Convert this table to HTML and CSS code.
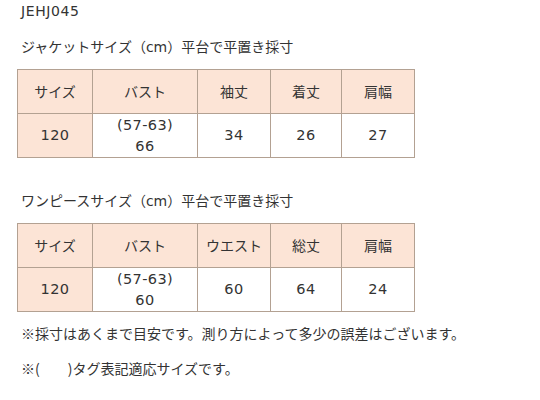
FILE: index.html
```html
<!DOCTYPE html>
<html lang="ja">
<head>
<meta charset="utf-8">
<link rel="stylesheet" href="styles.css">
</head>
<body>
<div class="page">
  <p class="code">JEHJ045</p>
  <p class="title">ジャケットサイズ（<span class="lat">cm</span>）平台で平置き採寸</p>
  <table class="size">
    <colgroup><col class="c1"><col class="c2"><col class="c3"><col class="c4"><col class="c5"></colgroup>
    <tr><th>サイズ</th><th>バスト</th><th>袖丈</th><th>着丈</th><th>肩幅</th></tr>
    <tr><th class="rowhead">120</th><td>(57-63)<br>66</td><td>34</td><td>26</td><td>27</td></tr>
  </table>
  <p class="title second">ワンピースサイズ（<span class="lat">cm</span>）平台で平置き採寸</p>
  <table class="size">
    <colgroup><col class="c1"><col class="c2"><col class="c3"><col class="c4"><col class="c5"></colgroup>
    <tr><th>サイズ</th><th>バスト</th><th>ウエスト</th><th>総丈</th><th>肩幅</th></tr>
    <tr><th class="rowhead">120</th><td>(57-63)<br>60</td><td>60</td><td>64</td><td>24</td></tr>
  </table>
  <p class="note">※採寸はあくまで目安です。測り方によって多少の誤差はございます。</p>
  <p class="note second-note">※(　　)タグ表記適応サイズです。</p>
</div>
</body>
</html>
```
FILE: styles.css
```css
html, body {
  margin: 0;
  padding: 0;
  background: #ffffff;
}
body {
  font-family: "Noto Sans CJK JP", sans-serif;
  font-size: 14px;
  line-height: 21px;
  color: #333333;
}
.page {
  padding: 1px 0 0 17px;
}
p {
  margin: 0;
  padding-left: 4px;
}
.code {
  font-family: "DejaVu Sans", "Noto Sans CJK JP", sans-serif;
  letter-spacing: 0.6px;
}
.title {
  margin-top: 14px;
}
.title.second {
  margin-top: 32px;
}
.lat {
  font-family: "DejaVu Sans", sans-serif;
}
.size {
  border-collapse: collapse;
  table-layout: fixed;
  width: 397px;
  margin-top: 11px;
}
.size .c1 { width: 75px; }
.size .c2 { width: 105px; }
.size .c3 { width: 73px; }
.size .c4 { width: 71px; }
.size .c5 { width: 73px; }
.size th, .size td {
  border: 1px solid #b3a192;
  height: 43px;
  padding: 0;
  text-align: center;
  vertical-align: middle;
  font-weight: normal;
  color: #333333;
}
.size th {
  background: #fce4d6;
}
.size td, .size .rowhead {
  font-family: "DejaVu Sans", "Noto Sans CJK JP", sans-serif;
  font-size: 14.5px;
  letter-spacing: 0.4px;
}
.size td {
  background: #ffffff;
}
.note {
  margin-top: 11px;
}
.second-note {
  margin-top: 14px;
}
```
